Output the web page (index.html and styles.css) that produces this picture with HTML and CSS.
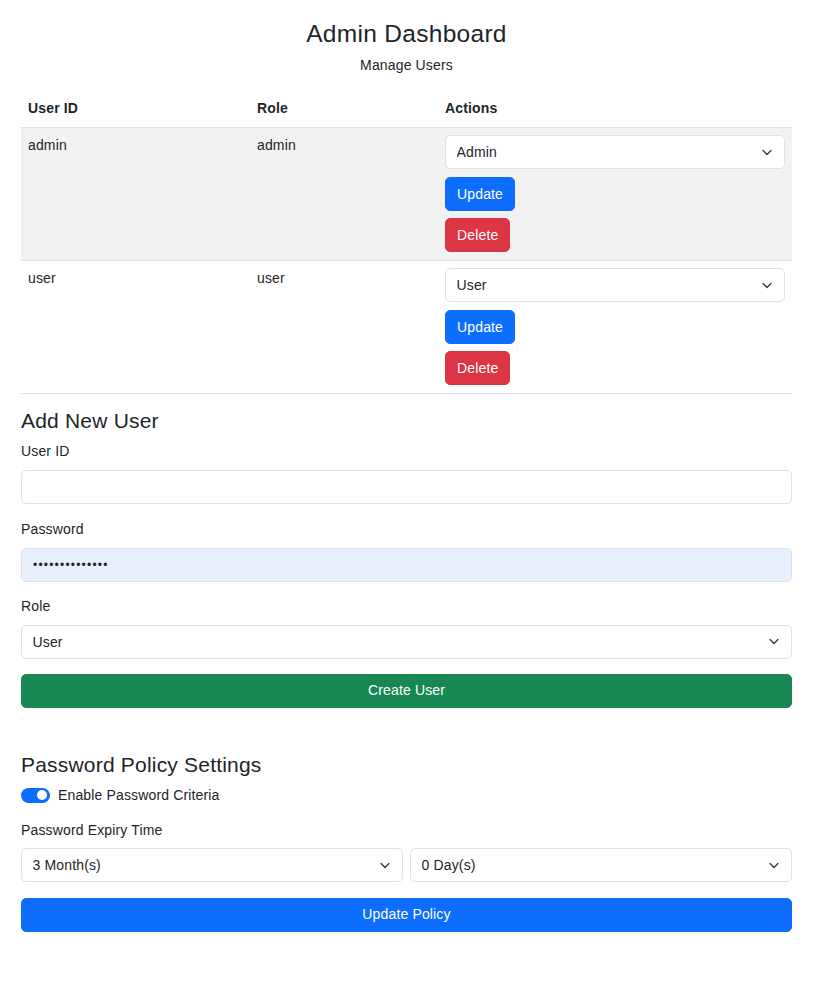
FILE: index.html
```html
<!DOCTYPE html>
<html lang="en">
<head>
<meta charset="utf-8">
<title>Admin Dashboard</title>
<link rel="stylesheet" href="styles.css">
</head>
<body>
<div class="container">
  <h3 class="title">Admin Dashboard</h3>
  <p class="subtitle">Manage Users</p>

  <table class="users">
    <thead>
      <tr><th class="c1">User ID</th><th class="c2">Role</th><th>Actions</th></tr>
    </thead>
    <tbody>
      <tr class="striped">
        <td>admin</td>
        <td>admin</td>
        <td>
          <div class="actions">
            <select class="select"><option selected>Admin</option><option>User</option></select>
            <button class="btn btn-primary">Update</button>
            <button class="btn btn-danger">Delete</button>
          </div>
        </td>
      </tr>
      <tr>
        <td>user</td>
        <td>user</td>
        <td>
          <div class="actions">
            <select class="select"><option>Admin</option><option selected>User</option></select>
            <button class="btn btn-primary">Update</button>
            <button class="btn btn-danger">Delete</button>
          </div>
        </td>
      </tr>
    </tbody>
  </table>

  <h4 class="section">Add New User</h4>
  <form class="form">
    <div class="group first">
      <label class="label">User ID</label>
      <input class="input" type="text">
    </div>
    <div class="group">
      <label class="label">Password</label>
      <input class="input autofill" type="password" value="abcdefghijklmn">
    </div>
    <div class="group last">
      <label class="label">Role</label>
      <select class="select"><option>Admin</option><option selected>User</option></select>
    </div>
    <button type="button" class="btn btn-success btn-block">Create User</button>
  </form>

  <h4 class="section policy">Password Policy Settings</h4>
  <div class="switch-row">
    <span class="switch"><span class="knob"></span></span>
    <span>Enable Password Criteria</span>
  </div>
  <div class="group expiry">
    <label class="label">Password Expiry Time</label>
    <div class="two">
      <select class="select"><option selected>3 Month(s)</option></select>
      <select class="select"><option selected>0 Day(s)</option></select>
    </div>
  </div>
  <button class="btn btn-primary btn-block">Update Policy</button>
</div>
</body>
</html>
```

FILE: styles.css
```css
* { box-sizing: border-box; }
html, body { margin: 0; padding: 0; background: #fff; }
body {
  font-family: "Liberation Sans", Arial, sans-serif;
  font-size: 14px;
  line-height: 21px;
  letter-spacing: 0.15px;
  color: #212529;
}
.container {
  width: 813px;
  padding: 19px 21px 40px 21px;
}
.title {
  font-size: 24.5px;
  font-weight: 400;
  line-height: 1.2;
  letter-spacing: 0.3px;
  text-align: center;
  margin: 0 0 7px;
}
.subtitle {
  text-align: center;
  margin: 0 0 14px;
}
.users {
  width: 100%;
  border-collapse: collapse;
  margin-bottom: 14px;
}
.users th {
  text-align: left;
  font-weight: 700;
  padding: 8px 7px;
  border-bottom: 1px solid #dee2e6;
}
.users th.c1 { width: 229px; }
.users th.c2 { width: 188px; }
.users td {
  padding: 7px 7px 8px;
  vertical-align: top;
  border-bottom: 1px solid #dee2e6;
}
.users tr.striped td { background: #f2f2f2; }
.actions {
  display: flex;
  flex-direction: column;
  align-items: flex-start;
  gap: 7px;
}
.select {
  display: block;
  width: 100%;
  height: 34px;
  font-family: inherit;
  font-size: 14px;
  letter-spacing: 0.15px;
  color: #212529;
  padding: 0 36px 0 10.5px;
  border: 1px solid #dee2e6;
  border-radius: 5px;
  background-color: #fff;
  background-image: url("data:image/svg+xml,%3csvg xmlns='http://www.w3.org/2000/svg' viewBox='0 0 16 16'%3e%3cpath fill='none' stroke='%23343a40' stroke-linecap='round' stroke-linejoin='round' stroke-width='2' d='m2 5 6 6 6-6'/%3e%3c/svg%3e");
  background-repeat: no-repeat;
  background-position: right 10.5px center;
  background-size: 14px 10.5px;
  -webkit-appearance: none;
  appearance: none;
}
.actions .select { margin-bottom: 1px; }
.btn {
  display: inline-block;
  font-family: inherit;
  font-size: 14px;
  letter-spacing: 0.15px;
  line-height: 21px;
  padding: 5.5px 11px;
  border: 1px solid transparent;
  border-radius: 5px;
  color: #fff;
  text-align: center;
  cursor: pointer;
}
.btn-primary { background: #0d6efd; border-color: #0d6efd; }
.btn-danger { background: #dc3545; border-color: #dc3545; }
.btn-success { background: #198754; border-color: #198754; }
.btn-block { display: block; width: 100%; }
.section {
  font-size: 21px;
  font-weight: 400;
  line-height: 1.2;
  letter-spacing: 0.2px;
  margin: 0 0 7px;
}
.section.policy { margin-top: 44px; margin-bottom: 8px; }
.form { margin: 0; }
.group { margin-bottom: 14px; }
.group.first, .group.last { margin-bottom: 15px; }
.label {
  display: block;
  margin-bottom: 8px;
}
.expiry .label { margin-top: 1px; margin-bottom: 7px; }
.expiry { margin-bottom: 16px; }
.input {
  display: block;
  width: 100%;
  height: 34px;
  font-family: inherit;
  font-size: 14px;
  color: #212529;
  padding: 0 10.5px;
  border: 1px solid #dee2e6;
  border-radius: 5px;
  background: #fff;
  outline: none;
}
.input.autofill {
  background: #e8f0fe;
  font-size: 12px;
  letter-spacing: 1.2px;
  padding-left: 11px;
}
.switch-row {
  display: flex;
  align-items: center;
  gap: 8px;
  margin-bottom: 14px;
}
.switch {
  position: relative;
  display: inline-block;
  width: 29px;
  height: 15px;
  border-radius: 8px;
  background: #0d6efd;
}
.knob {
  position: absolute;
  right: 3px;
  top: 2.5px;
  width: 10px;
  height: 10px;
  border-radius: 50%;
  background: #fff;
}
.two {
  display: grid;
  grid-template-columns: 1fr 1fr;
  gap: 7px;
}
```
